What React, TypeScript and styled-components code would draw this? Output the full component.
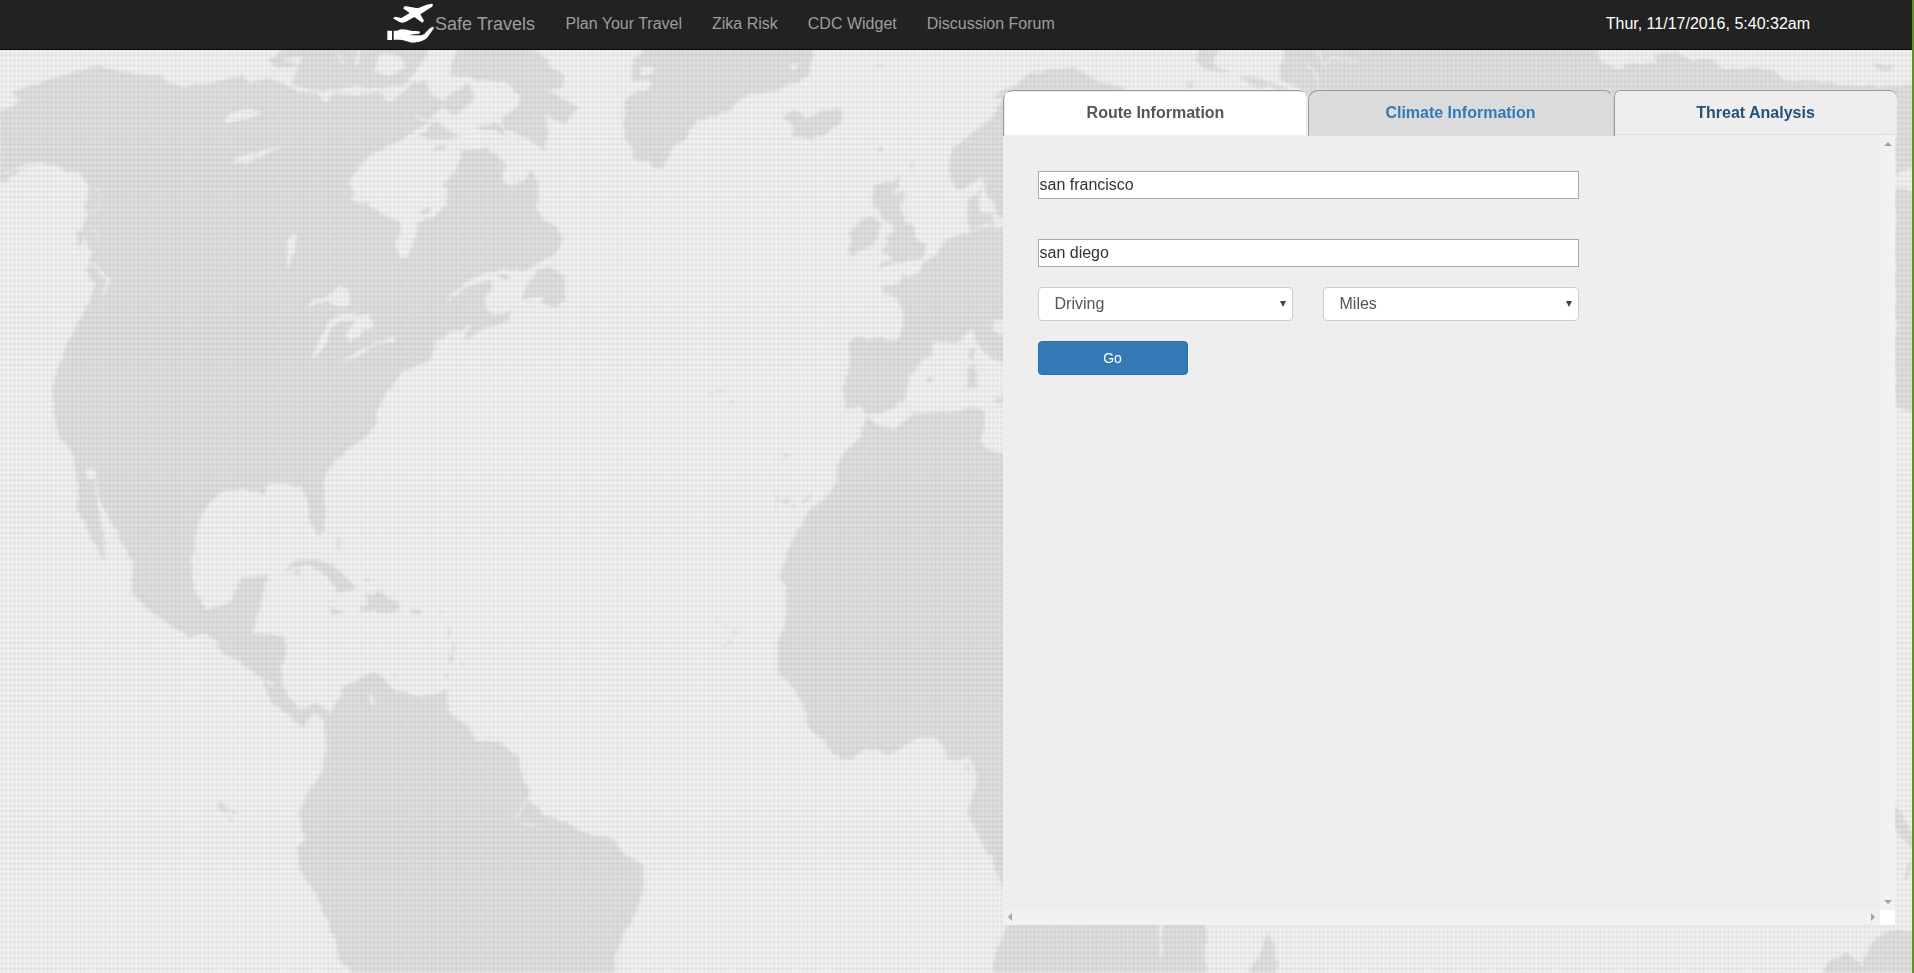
import React from 'react';
import styled, { createGlobalStyle, css } from 'styled-components';

const GlobalStyle = createGlobalStyle`
  *, *::before, *::after { box-sizing: border-box; }
  html, body { margin: 0; padding: 0; height: 100%; overflow: hidden; }
  body {
    font-family: "Liberation Sans", Arial, sans-serif;
    font-size: 16px;
    line-height: 20px;
    color: #333;
    background: #ececec;
  }
`;

const Page = styled.div`
  position: relative;
  height: 973px;
  border-right: 2px solid #5f931b;
  overflow: hidden;
`;

const MapSvg = styled.svg`
  position: absolute;
  inset: 0;
  width: 1914px;
  height: 973px;
`;

const Header = styled.header`
  position: relative;
  display: flex;
  align-items: center;
  height: 50px;
  padding: 0 102px 0 385px;
  background: #222;
  border-bottom: 1px solid #080808;
`;

const Brand = styled.a`
  display: flex;
  align-items: center;
  width: 165.5px;
  font-size: 18px;
  color: #9d9d9d;
`;

const Logo = styled.svg`
  flex: none;
  width: 50px;
  height: 48px;
  margin-bottom: 2px;
`;

const Nav = styled.nav`
  display: flex;
  flex: 1;
`;

const NavLink = styled.a`
  padding: 0 15px 2px;
  color: #9d9d9d;
`;

const BrandText = styled.span`
  padding-bottom: 1px;
`;

const Clock = styled.span`
  color: #fff;
  padding-bottom: 2px;
`;

const Main = styled.main`
  position: relative;
  width: 895px;
  margin: 40px 0 0 1003px;
`;

const Tabs = styled.ul`
  display: flex;
  margin: 0;
  padding: 0;
  height: 45px;
  list-style: none;
`;

type TabKind = 'active' | 'hover' | 'plain';

const Tab = styled.li<{ $kind: TabKind; $width: number }>`
  width: ${p => p.$width}px;
  height: 46px;
  border: 1px solid #999;
  border-right: 0;
  border-bottom: 0;
  border-radius: 10px 10px 0 0;
  background: #eee;
  ${p => p.$kind === 'active' && css`padding: 1px 2px 1px 1px;`}
  ${p => p.$kind === 'hover' && css`background: #dbdbdb; border-right: 1px solid #ccc;`}
  ${p => p.$kind === 'plain' && css`border-radius: 6px 8px 0 0;`}
`;

const tabColor = { active: '#555', hover: '#337ab7', plain: '#23527c' };

const TabLink = styled.a<{ $kind: TabKind }>`
  display: flex;
  align-items: center;
  justify-content: center;
  height: ${p => (p.$kind === 'active' ? 43 : 44)}px;
  border-radius: 4px 4px 0 0;
  font-weight: bold;
  color: ${p => tabColor[p.$kind]};
  background: ${p => (p.$kind === 'active' ? '#fff' : 'transparent')};
  border-bottom: ${p => (p.$kind === 'plain' ? '1px solid #ddd' : '0')};
  padding-bottom: ${p => (p.$kind === 'plain' ? 0 : 1)}px;
  padding-right: ${p => (p.$kind === 'active' ? 0 : 1)}px;
`;

const Panel = styled.section`
  display: grid;
  grid-template: 775px 15px / 877px 15px;
  width: 892px;
  background: #eee;
`;

const Form = styled.form`
  display: flex;
  flex-direction: column;
  width: 576px;
  padding: 36px 0 0 35px;
`;

const TextField = styled.input`
  width: 541px;
  height: 28px;
  margin: 0 0 40px;
  padding: 0 0 1px 0.5px;
  border: 1px solid #a9a9a9;
  border-radius: 0;
  background: #fff;
  color: #333;
  font: 16px "Liberation Sans", Arial, sans-serif;
  outline: none;

  & + & { margin-bottom: 20px; }
`;

const SelectRow = styled.div`
  display: grid;
  grid-template-columns: 255px 256px;
  column-gap: 30px;
`;

const SelectBox = styled.div`
  display: flex;
  align-items: center;
  justify-content: space-between;
  height: 34px;
  padding: 0 6px 0 15.5px;
  border: 1px solid #ccc;
  border-radius: 4px;
  background: #fff;
  color: #555;
`;

const Caret = styled.span`
  border: 3px solid transparent;
  border-top: 6px solid #444;
  border-bottom: 0;
`;

const GoButton = styled.button`
  width: 150px;
  height: 34px;
  margin-top: 20px;
  padding: 0 1px 1px 0;
  border: 1px solid #2e6da4;
  border-radius: 4px;
  background: #337ab7;
  color: #fff;
  font: 14px "Liberation Sans", Arial, sans-serif;
`;

const ScrollTrack = styled.div<{ $vertical?: boolean }>`
  display: flex;
  flex-direction: ${p => (p.$vertical ? 'column' : 'row')};
  align-items: center;
  justify-content: space-between;
  padding: ${p => (p.$vertical ? '7px 0 6px' : '0 5px 1px')};
  background: #f1f1f1;
`;

const ScrollCorner = styled.div`
  background: #fff;
`;

const Arrow = styled.span<{ $dir: 'up' | 'down' | 'left' | 'right' }>`
  width: 0;
  height: 0;
  border: 4px solid transparent;
  ${p => p.$dir === 'up' && css`border-top: 0; border-bottom-color: #a3a3a3;`}
  ${p => p.$dir === 'down' && css`border-bottom: 0; border-top-color: #a3a3a3;`}
  ${p => p.$dir === 'left' && css`border-left: 0; border-right-color: #a3a3a3;`}
  ${p => p.$dir === 'right' && css`border-right: 0; border-left-color: #a3a3a3;`}
`;

const LAND = '#e6e6e6';
const SEA = '#f9f9f9';

function WorldMap() {
  return (
    <MapSvg viewBox="0 0 1914 973" aria-hidden="true">
      <defs>
        <linearGradient id="col" x1="0" x2="1" y1="0" y2="0">
          <stop offset="0" stopColor="#000" stopOpacity="0" />
          <stop offset=".5" stopColor="#000" stopOpacity=".05" />
          <stop offset="1" stopColor="#000" stopOpacity="0" />
        </linearGradient>
        <linearGradient id="row" x1="0" x2="0" y1="0" y2="1">
          <stop offset="0" stopColor="#000" stopOpacity="0" />
          <stop offset=".5" stopColor="#000" stopOpacity=".06" />
          <stop offset="1" stopColor="#000" stopOpacity="0" />
        </linearGradient>
        <pattern id="cols" width="4.13" height="10" patternUnits="userSpaceOnUse">
          <rect width="4.13" height="10" fill="url(#col)" />
        </pattern>
        <pattern id="rows" width="10" height="5.25" patternUnits="userSpaceOnUse">
          <rect width="10" height="5.25" fill="url(#row)" />
        </pattern>
        <filter id="coast" x="0" y="0" width="1914" height="973" filterUnits="userSpaceOnUse" colorInterpolationFilters="sRGB">
          <feTurbulence type="fractalNoise" baseFrequency=".11" numOctaves="2" seed="4" />
          <feDisplacementMap in="SourceGraphic" scale="6" xChannelSelector="R" yChannelSelector="G" />
          <feGaussianBlur stdDeviation=".9" />
        </filter>
      </defs>
      <rect width="1914" height="973" fill={SEA} />
      <g fill={LAND} filter="url(#coast)">
        {/* Canada, the United States and the arctic islands */}
        <g transform="translate(0 40) scale(.38265 .33333)">
          <path d="M-20 215L20 205L50 185L35 155L90 135L160 105L220 90L260 75L300 92L350 102L410 105L440 125L475 140L540 128L600 118L635 105L650 128L690 118L740 130L775 155L830 160L850 185L880 158L940 165L990 155L1020 185L1050 160L1080 130L1110 120L1130 165L1165 180L1150 215L1130 240L1090 270L1060 290L1010 320L970 345L935 385L910 430L925 455L920 485L960 490L990 520L1045 545L1045 580L1030 615L1045 655L1065 650L1085 590L1090 550L1140 525L1168 490L1170 455L1158 435L1195 385L1205 335L1240 325L1275 328L1300 350L1320 375L1310 420L1335 440L1375 415L1392 385L1405 430L1410 470L1400 500L1420 540L1455 560L1468 600L1455 640L1410 665L1380 690L1300 690L1250 705L1200 740L1165 790L1215 745L1280 720L1290 745L1262 775L1270 810L1295 830L1335 810L1330 840L1270 865L1220 900L1215 880L1235 855L1180 875L1140 905L1125 960L1090 975L1050 1000L1010 1060L985 1110L985 1150L950 1195L900 1240L860 1280L845 1320L848 1390L852 1440L808 1440L805 1370L790 1335L770 1345L740 1322L700 1330L690 1365L650 1350L590 1350L550 1385L520 1440L285 1440L262 1380L250 1320L250 1290L225 1285L228 1330L245 1400L250 1440L215 1440L200 1390L205 1330L190 1240L160 1195L145 1150L137 1050L150 990L175 910L210 840L235 780L245 730L225 690L240 640L215 580L225 540L222 500L235 440L210 400L170 390L120 370L60 385L15 425L-20 415Z" />
          <path d="M700 60L740 20L1130 20L1100 70L1070 120L1060 135L1000 145L930 140L870 150L800 150L765 130L780 80L720 80Z" />
          <path d="M1200 20L1390 20L1440 80L1475 110L1470 145L1430 150L1515 205L1470 250L1440 235L1425 215L1435 280L1420 330L1370 290L1320 270L1310 240L1350 205L1360 170L1320 125L1250 120L1180 105L1180 70Z" />
          <path d="M1165 170L1230 130L1240 180L1190 225L1155 200ZM1090 290L1140 245L1200 290L1130 300ZM1240 265L1300 245L1330 290L1290 270ZM1125 330L1160 310L1165 330ZM1100 515L1120 500L1125 515L1108 525Z" />
          <path d="M1405 690L1440 680L1475 710L1478 780L1460 805L1415 790L1420 770L1365 775L1380 730Z" />
          <path d="M200 630L203 570L222 575L215 600ZM1300 700L1335 710L1320 725Z" />
          <g fill={SEA}>
            <path d="M975 90L1000 40L1050 50L1060 80L1020 110ZM735 60L790 50L780 75Z" />
            <path d="M795 800L830 775L865 765L885 735L910 745L915 800L890 800L860 785Z" />
            <path d="M815 960L835 900L860 840L890 822L960 825L980 860L950 865L940 890L915 910L905 880L930 840L895 840L865 865L845 925Z" />
            <path d="M890 965L930 935L970 915L1035 885L1030 905L990 910L930 955Z" />
            <path d="M765 580L775 600L765 650L750 690L750 610Z" />
            <path d="M585 250L600 215L640 210L690 215L640 240ZM600 370L640 345L740 318L680 350L640 370Z" />
          </g>
          <g fill="none" stroke={SEA} strokeWidth="7">
            <path d="M240 670L285 720L270 770M15 400L70 372L110 375" />
            <path d="M880 40L900 70M940 30L930 80M1085 220L1110 245L1160 205M1120 60L1090 130" />
          </g>
          <g fill="none" stroke={SEA} strokeWidth="5" strokeOpacity=".6">
            <path d="M245 440L270 470L255 510M230 520L265 500M235 560L265 600" />
          </g>
        </g>
        {/* Greenland, Iceland and western Europe */}
        <g transform="translate(560 40) scale(.33333)">
          <path d="M250 20L760 20L750 100L720 125L640 155L560 165L500 215L410 240L380 290L340 320L310 380L280 390L265 365L225 360L195 290L195 180L230 155L265 150L275 120L210 125L215 80Z" />
          <path d="M670 235L700 210L740 235L780 215L835 205L852 240L800 280L750 300L690 285L700 255Z" />
          <path d="M935 470L945 435L1000 425L1020 405L1015 440L1000 455L1038 460L1020 505L1040 545L1060 560L1070 600L1098 610L1085 660L1020 665L950 690L965 670L1000 655L960 635L985 615L975 590L1005 575L990 545L960 530Z" />
          <path d="M870 580L910 535L950 530L965 555L945 610L875 648L862 630L880 605Z" />
          <path d="M1340 165L1290 240L1230 285L1180 325L1168 350L1170 420L1200 450L1240 430L1265 405L1280 460L1300 490L1310 530L1340 530Z" />
          <path d="M1220 480L1255 465L1265 440L1255 520L1300 520L1300 560L1280 545L1230 575Z" />
          <path d="M1340 565L1280 560L1230 575L1160 600L1130 645L1090 665L1085 690L1045 712L1025 705L1020 730L960 740L975 760L1010 775L1030 810L1028 860L1015 898L890 890L862 912L870 950L865 1000L848 1045L858 1105L900 1100L925 1125L990 1110L1030 1080L1045 1030L1050 1000L1080 970L1110 950L1118 905L1180 915L1235 870L1260 920L1300 955L1340 975L1340 895L1300 870L1305 835L1340 850Z" />
          <path d="M1218 985L1248 972L1250 1040L1220 1045ZM1225 930L1245 920L1240 965L1225 950ZM1095 1015L1120 1008L1110 1032ZM1305 1075L1340 1070L1340 1090L1308 1090Z" />
          <path d="M925 1130L940 1150L980 1165L1010 1160L1060 1125L1140 1115L1240 1105L1275 1110L1275 1170L1260 1200L1280 1230L1340 1245L1340 1440L740 1440L750 1405L790 1385L830 1330L830 1290L850 1240L900 1195L915 1140Z" />
          <path d="M948 80L968 72L965 82ZM950 320L968 318L958 345ZM1045 380L1062 362L1058 380ZM448 1053L464 1060L455 1068ZM473 1048L490 1054L480 1062ZM506 1078L524 1085L515 1094ZM670 1238L692 1245L680 1254Z" />
          <path d="M645 1368L657 1375L650 1384ZM666 1386L692 1376L682 1398ZM723 1397L752 1356L738 1394ZM690 1388L708 1398L698 1408ZM643 1398L654 1405L646 1410Z" />
          <path d="M245 85L280 78L275 105L248 108ZM690 75L720 70L705 95Z" fill={SEA} />
        </g>
        {/* Mexico, the Caribbean and South America */}
        <g transform="translate(0 480) scale(.42092 .33333)">
          <path d="M232 0L765 0L770 80L772 150L755 168L740 130L730 60L715 20L660 8L640 10L625 45L590 30L540 28L490 70L475 110L455 240L460 320L490 390L545 370L575 290L638 288L625 340L600 460L670 465L685 500L670 560L670 620L710 690L750 670L785 700L815 625L885 575L905 590L945 635L1000 650L1060 630L1070 700L1110 740L1135 785L1190 785L1230 830L1245 910L1262 940L1230 1000L1280 1035L1290 1000L1350 1030L1400 1065L1450 1070L1490 1130L1525 1150L1530 1230L1510 1300L1480 1370L1460 1430L1460 1500L845 1500L805 1430L795 1370L745 1230L710 1165L708 1100L725 1070L710 1000L730 940L765 880L775 800L770 720L745 695L720 745L695 715L640 660L625 600L580 555L530 520L510 480L485 455L455 475L400 435L350 385L310 325L318 250L290 190L250 90Z" />
          <path d="M190 0L225 0L235 100L250 190L245 240L220 180L180 80L205 70Z" />
          <path d="M675 275L700 240L750 235L800 265L850 325L800 340L780 290L730 255ZM700 275L715 270L710 290Z" />
          <path d="M850 390L880 370L865 340L910 340L955 385L900 400ZM975 385L1002 388L998 402L975 400ZM778 385L817 395L790 406ZM865 300L880 295L872 308ZM798 170L806 185L808 215L800 200Z" />
          <path d="M1063 448L1074 448L1068 474ZM1070 486L1080 500L1072 519ZM1068 528L1080 530L1072 548ZM1093 543L1104 555L1096 560ZM1053 578L1064 585L1057 594ZM1041 393L1054 398L1047 405ZM930 580L945 585L938 592Z" />
          <path d="M518 965L530 960L545 1000L522 995ZM550 988L564 995L556 1004ZM538 1008L557 1015L548 1022Z" />
          <path d="M875 650L885 635L890 670L882 685ZM630 595L648 605L645 620Z" fill={SEA} />
          <path d="M1232 1030L1235 990L1258 955L1290 1000L1282 1030Z" />
          <path d="M1225 1015L1238 990L1256 952M1245 1035L1270 1035" fill="none" stroke={SEA} strokeWidth="4" />
        </g>
        {/* West and southern Africa */}
        <g transform="translate(700 480) scale(.38265 .33333)">
          <path d="M360 0L820 0L820 1290L790 1220L760 1130L720 1050L700 1000L715 940L725 880L705 835L650 838L630 790L610 770L570 775L530 800L490 825L460 810L425 815L385 840L360 830L280 735L270 675L230 600L205 580L200 500L225 410L225 320L208 290L230 210L265 135L290 85L330 55Z" />
          <path d="M815 1300L1322 1300L1322 1500L760 1500L775 1410ZM1485 1355L1505 1400L1508 1500L1420 1500L1460 1430Z" />
          <path d="M698 860L706 852L704 870L698 878ZM43 418L54 425L48 434ZM60 434L74 438L68 448ZM88 450L100 455L92 464ZM73 480L90 485L80 500ZM53 493L68 494L60 502Z" />
          <path d="M1205 1335L1200 1365L1207 1425" fill="none" stroke={SEA} strokeWidth="9" />
        </g>
        {/* Scandinavia and northern Russia above the tabs */}
        <g transform="translate(980 48) scale(.33333)">
          <path d="M30 150L110 110L140 80L210 65L290 60L340 95L440 125L440 160ZM655 0L715 0L700 50L750 72L680 65L645 40ZM775 80L850 95L930 125L820 115ZM615 105L640 102L635 122ZM700 118L715 120L710 128Z" />
          <path d="M910 0L1460 0L1460 160L1000 160L960 120L905 100L895 60L920 20Z" />
          <path d="M980 45L1010 85L1020 130M1010 10L1035 50L1060 30L1130 40" fill="none" stroke={SEA} strokeWidth="7" />
        </g>
        <g transform="translate(1440 0) scale(.33333)">
          <path d="M-30 140L465 140L490 190L545 205L560 190L650 190L640 165L700 155L760 180L810 178L860 205L960 205L1010 215L1035 240L1150 245L1240 260L1440 255L1440 500L1366 520L1366 280L-30 280ZM1300 195L1350 193L1355 210L1305 210Z" />
          <path d="M1440 580L1440 1240L1366 1220L1366 560Z" />
          <path d="M1190 235L1230 258M545 185L540 205" fill="none" stroke={SEA} strokeWidth="9" />
        </g>
        {/* Indian Ocean islands and Australia */}
        <path d="M1818 980L1831 960L1845 953L1857 961L1863 967L1863 960L1873 940L1887 931L1925 931L1925 980ZM1893 806L1903 812L1914 838L1914 850L1895 830ZM1903 878L1910 860L1914 862L1907 880Z" />
      </g>
      <rect width="1914" height="973" fill="url(#cols)" />
      <rect width="1914" height="973" fill="url(#rows)" />
    </MapSvg>
  );
}

const navItems = ['Plan Your Travel', 'Zika Risk', 'CDC Widget', 'Discussion Forum'];

const tabs: { label: string; kind: TabKind; width: number }[] = [
  { label: 'Route Information', kind: 'active', width: 305 },
  { label: 'Climate Information', kind: 'hover', width: 306 },
  { label: 'Threat Analysis', kind: 'plain', width: 283 },
];

export default function App() {
  return (
    <>
      <GlobalStyle />
      <Page>
        <WorldMap />
        <Header>
          <Brand>
            <Logo viewBox="15 0 150 144" fill="#fff" aria-hidden="true">
              <path d="M155 11C160 11 160 17 155 21L121 43L132 62L127 68L103 51L78 65Q68 71 58 66L39 55L46 50L64 54L89 39L69 25L75 18L113 25L140 14Z" />
              <path d="M22 92H36V120H22ZM41 92H52Q64 85 80 89L97 93Q118 92 120 96Q121 102 108 102L92 104V106H125Q133 104 142 92Q150 82 159 80Q164 83 158 90L141 114Q130 124 108 127Q95 130 80 124Q70 119 60 119H41Z" />
            </Logo>
            <BrandText>Safe Travels</BrandText>
          </Brand>
          <Nav>
            {navItems.map(item => (
              <NavLink key={item}>{item}</NavLink>
            ))}
          </Nav>
          <Clock>Thur, 11/17/2016, 5:40:32am</Clock>
        </Header>
        <Main>
          <Tabs>
            {tabs.map(t => (
              <Tab key={t.label} $kind={t.kind} $width={t.width}>
                <TabLink $kind={t.kind}>{t.label}</TabLink>
              </Tab>
            ))}
          </Tabs>
          <Panel>
            <Form>
              <TextField defaultValue="san francisco" />
              <TextField defaultValue="san diego" />
              <SelectRow>
                <SelectBox>Driving<Caret /></SelectBox>
                <SelectBox>Miles<Caret /></SelectBox>
              </SelectRow>
              <GoButton type="button">Go</GoButton>
            </Form>
            <ScrollTrack $vertical>
              <Arrow $dir="up" />
              <Arrow $dir="down" />
            </ScrollTrack>
            <ScrollTrack>
              <Arrow $dir="left" />
              <Arrow $dir="right" />
            </ScrollTrack>
            <ScrollCorner />
          </Panel>
        </Main>
      </Page>
    </>
  );
}
